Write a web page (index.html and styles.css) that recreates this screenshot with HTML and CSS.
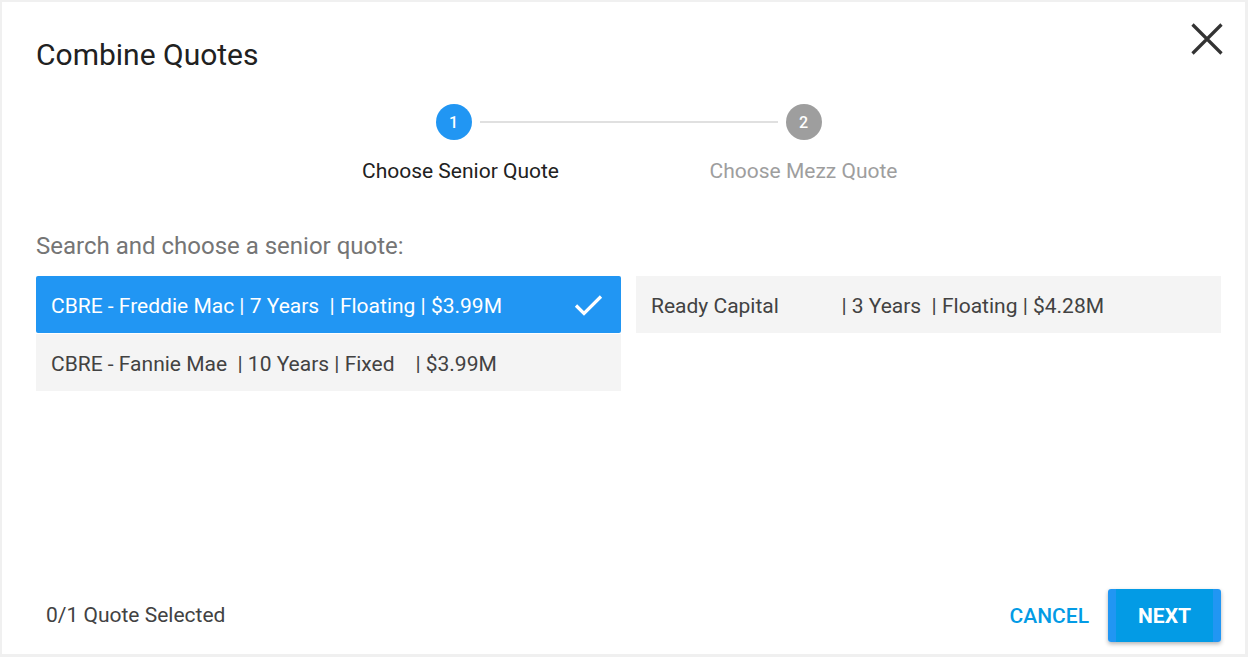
FILE: index.html
```html
<!DOCTYPE html>
<html>
<head>
<meta charset="utf-8">
<link rel="stylesheet" href="styles.css">
</head>
<body>
<div class="dialog">
  <div class="header">
    <h1 class="title">Combine Quotes</h1>
    <button class="close" aria-label="Close">
      <svg width="34" height="34" viewBox="0 0 34 34"><path d="M2.5 2.5 L31.5 31.5 M31.5 2.5 L2.5 31.5" stroke="#333" stroke-width="3.2" fill="none"/></svg>
    </button>
  </div>
  <div class="stepper">
    <div class="step active">
      <div class="circle">1</div>
      <div class="label">Choose Senior Quote</div>
    </div>
    <div class="connector"></div>
    <div class="step">
      <div class="circle">2</div>
      <div class="label">Choose Mezz Quote</div>
    </div>
  </div>
  <div class="prompt">Search and choose a senior quote:</div>
  <div class="quotes">
    <div class="col">
      <div class="quote selected">
        <span>CBRE - Freddie Mac | 7 Years&nbsp; | Floating | $3.99M</span>
        <svg class="check" width="30" height="24" viewBox="0 0 30 24"><path d="M2 12.5 L10 20.5 L27 3.5" stroke="#fff" stroke-width="3.2" fill="none"/></svg>
      </div>
      <div class="quote"><span>CBRE - Fannie Mae&nbsp; | 10 Years | Fixed &nbsp; &nbsp;| $3.99M</span></div>
    </div>
    <div class="col">
      <div class="quote"><span>Ready Capital &nbsp; &nbsp; &nbsp; &nbsp; &nbsp; &nbsp;| 3 Years&nbsp; | Floating | $4.28M</span></div>
    </div>
  </div>
  <div class="spacer"></div>
  <div class="footer">
    <div class="count">0/1 Quote Selected</div>
    <div class="actions">
      <button class="btn-text">CANCEL</button>
      <button class="btn-primary">NEXT</button>
    </div>
  </div>
</div>
</body>
</html>
```
FILE: styles.css
```css
html, body {
  margin: 0;
  height: 100%;
}
body {
  background: #f0f0f0;
  font-family: Roboto, "Liberation Sans", sans-serif;
  padding: 2px 3px 3px 2px;
  box-sizing: border-box;
}
.dialog {
  background: #fff;
  height: 100%;
  box-sizing: border-box;
  display: flex;
  flex-direction: column;
  padding: 0 24px 0 34px;
}
.header {
  display: flex;
  justify-content: space-between;
  align-items: flex-start;
  height: 102px;
}
.title {
  margin: 36px 0 0 0;
  font-size: 30px;
  font-weight: 400;
  color: #212121;
  line-height: 34px;
}
.close {
  margin-top: 20px;
  margin-right: -3px;
  background: none;
  border: 0;
  padding: 0;
  width: 34px;
  height: 34px;
  cursor: pointer;
}
.stepper {
  display: flex;
  justify-content: center;
  align-items: flex-start;
}
.step {
  width: 220px;
  display: flex;
  flex-direction: column;
  align-items: center;
}
.circle {
  width: 36px;
  height: 36px;
  border-radius: 50%;
  background: #9e9e9e;
  color: #fff;
  font-size: 16px;
  font-weight: 500;
  display: flex;
  align-items: center;
  justify-content: center;
}
.step.active .circle {
  background: #2196f3;
}
.label {
  margin-top: 19px;
  font-size: 21px;
  color: #9e9e9e;
  line-height: 24px;
}
.step.active .label {
  color: #212121;
  margin-left: 14px;
}
.connector {
  height: 2px;
  background: #e0e0e0;
  width: 298px;
  margin: 17px -84px 0;
}
.prompt {
  margin-top: 49px;
  font-size: 24px;
  color: #757575;
  line-height: 28px;
}
.quotes {
  margin-top: 16px;
  display: flex;
  gap: 15px;
}
.col {
  flex: 1;
  display: flex;
  flex-direction: column;
  gap: 1px;
}
.quote {
  background: #f4f4f4;
  height: 57px;
  box-sizing: border-box;
  display: flex;
  align-items: center;
  justify-content: space-between;
  padding: 3px 17px 0 15px;
  font-size: 21px;
  color: #424242;
}
.quote.selected {
  background: #2196f3;
  color: #fff;
  border-radius: 2px;
}
.quote .check {
  margin-top: -3px;
}
.spacer {
  flex: 1;
}
.footer {
  display: flex;
  justify-content: space-between;
  align-items: center;
  height: 54px;
  margin-bottom: 12px;
}
.count {
  font-size: 21px;
  color: #424242;
  padding-left: 10px;
}
.actions {
  display: flex;
  align-items: center;
  gap: 19px;
}
.btn-text {
  background: none;
  border: 0;
  font-family: inherit;
  font-size: 21px;
  font-weight: 500;
  color: #039be5;
  padding: 2px 0 0;
  height: 53px;
}
.btn-primary {
  border: 0;
  font-family: inherit;
  font-size: 21px;
  font-weight: 700;
  color: #fff;
  width: 113px;
  height: 53px;
  padding: 2px 0 0;
  border-radius: 3px;
  background: linear-gradient(to right, #2196f3 0, #2196f3 8px, #039be5 8px, #039be5 105px, #2196f3 105px);
  box-shadow: 0 2px 4px rgba(0,0,0,0.3);
}
```
